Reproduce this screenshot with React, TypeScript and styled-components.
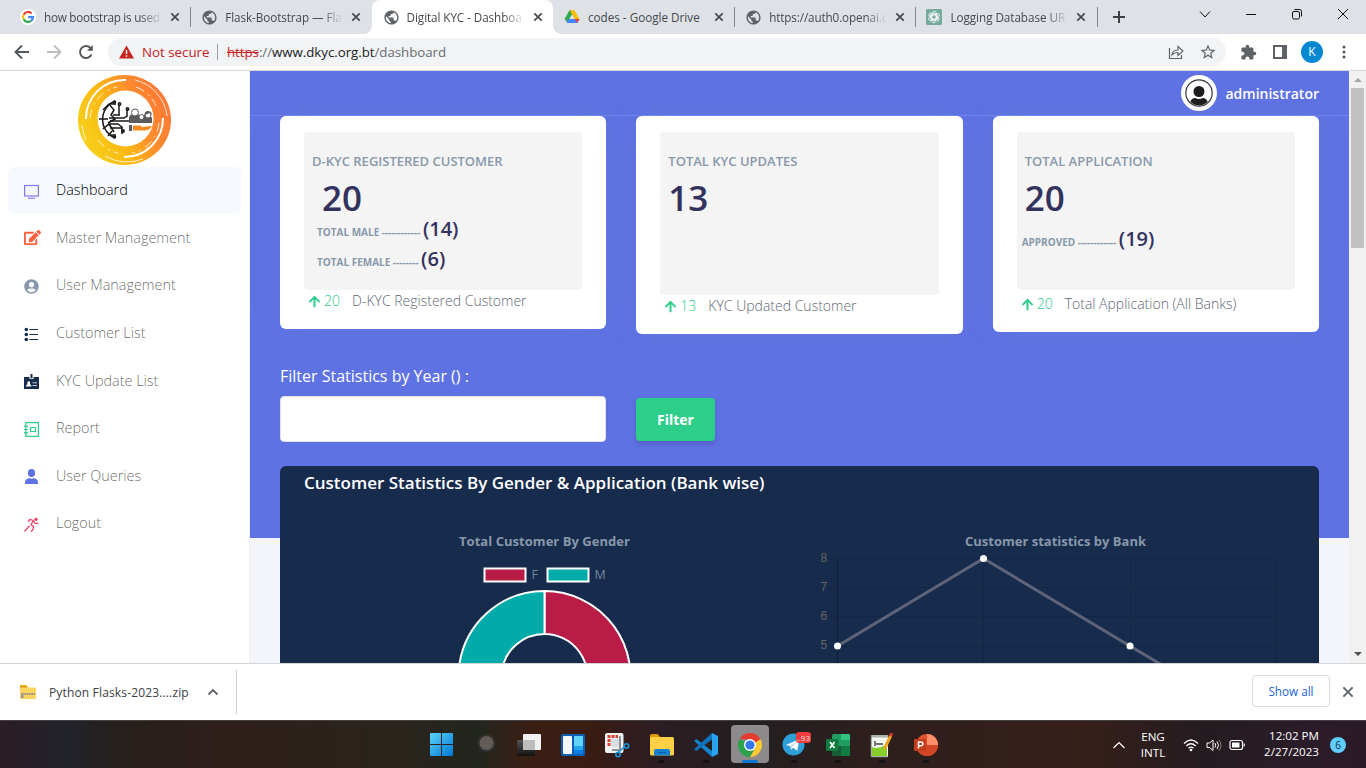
import React from 'react';
import styled, { createGlobalStyle } from 'styled-components';
import { FaArrowUp, FaEdit, FaUserCircle } from 'react-icons/fa';
import { MdExtension, MdStarBorder, MdPublic } from 'react-icons/md';

const Global = createGlobalStyle`
  html, body { margin: 0; padding: 0; }
  body { width: 1366px; height: 768px; overflow: hidden; font-family: "Open Sans", sans-serif; }
  * { box-sizing: border-box; }
  svg { display: block; flex: none; overflow: visible; }
`;

const Screen = styled.div`
  width: 1366px;
  height: 768px;
  display: flex;
  flex-direction: column;
  background: #fff;
`;

/* ---------- browser tabs ---------- */
const TabStrip = styled.div`
  height: 34px;
  background: #dee1e6;
  display: flex;
  padding-left: 9px;
`;

const Tab = styled.div<{ $active?: boolean; $line?: boolean }>`
  position: relative;
  flex: none;
  width: 181.3px;
  height: 34px;
  display: flex;
  align-items: center;
  padding-left: 11px;
  border-radius: 8px 8px 0 0;
  background: ${p => (p.$active ? '#fff' : 'transparent')};
  ${p => p.$active && `
    &::before, &::after {
      content: ''; position: absolute; bottom: 0; width: 8px; height: 8px;
    }
    &::before { left: -8px; background: radial-gradient(circle at 0 0, transparent 7.5px, #fff 8px); }
    &::after { right: -8px; background: radial-gradient(circle at 100% 0, transparent 7.5px, #fff 8px); }
  `}
  ${p => p.$line && `
    &::after {
      content: ''; position: absolute; right: -1px; top: 7px; width: 1px; height: 20px; background: #85888d;
    }
  `}
`;

const Favicon = styled.div`
  width: 16px;
  height: 16px;
  margin-right: 8px;
  color: #5f6368;
`;

const TabTitle = styled.div<{ $fade?: boolean; $ls?: number }>`
  width: 118px;
  height: 20px;
  line-height: 20px;
  overflow: hidden;
  white-space: nowrap;
  font-size: 11.7px;
  letter-spacing: ${p => p.$ls ?? 0}px;
  color: #45494d;
  ${p => p.$fade && 'mask-image: linear-gradient(90deg, #000 82%, transparent 100%);'}
`;

const TabClose = styled.div`
  margin-left: 9px;
`;

const NewTab = styled.div`
  margin: 11px 0 0 16px;
`;

const WindowButtons = styled.div`
  margin-left: auto;
  display: flex;
  gap: 34px;
  padding: 8px 18px 0 0;
  align-items: flex-start;
`;

/* ---------- address bar ---------- */
const Toolbar = styled.div`
  height: 37px;
  background: #fff;
  border-bottom: 1px solid #d6d8db;
  display: flex;
  align-items: center;
  padding: 0 20px 0 14px;
`;

const NavIcons = styled.div`
  display: flex;
  gap: 16px;
  width: 94px;
`;

const Omnibox = styled.div`
  width: 1118px;
  height: 28px;
  border-radius: 14px;
  background: #f1f3f4;
  display: flex;
  align-items: center;
  padding: 0 9px 0 11px;
`;

const NotSecure = styled.span`
  margin-left: 8px;
  width: 67px;
  font-size: 13.3px;
  color: #c5221f;
  white-space: nowrap;
`;

const Separator = styled.span`
  width: 1px;
  height: 16px;
  margin: 0 9px 0 8px;
  background: #9a9da1;
`;

const Url = styled.span`
  font-size: 13.3px;
  letter-spacing: -0.04px;
  color: #6a6e73;
  white-space: nowrap;
  s { color: #c5221f; }
  b { font-weight: 400; color: #202124; }
`;

const OmniActions = styled.div`
  margin-left: auto;
  display: flex;
  align-items: center;
  gap: 15px;
  color: #5f6368;
`;

const ToolbarActions = styled.div`
  margin-left: auto;
  display: flex;
  align-items: center;
  color: #5f6368;
`;

const Profile = styled.div`
  width: 22px;
  height: 22px;
  border-radius: 50%;
  margin: 0 19px 0 10px;
  background: #0288d1;
  color: #fff;
  font-size: 12px;
  line-height: 22px;
  text-align: center;
`;

/* ---------- page ---------- */
const Viewport = styled.div`
  height: 592px;
  display: flex;
  overflow: hidden;
`;

const Sidebar = styled.aside`
  width: 250px;
  padding: 4px 8px 0 8px;
  background: #fff;
  border-right: 1px solid #f0f0f4;
`;

const LogoBox = styled.div`
  height: 92px;
  padding-left: 70px;
`;

const NavItem = styled.div<{ $active?: boolean }>`
  height: 46px;
  margin-bottom: 1.65px;
  border-radius: 6px;
  display: flex;
  align-items: center;
  padding-left: 15px;
  background: ${p => (p.$active ? '#f5f8fc' : 'transparent')};
  color: ${p => (p.$active ? '#000' : 'rgba(0,0,0,.62)')};
`;

const NavIcon = styled.span<{ $up?: number }>`
  width: 33px;
  padding: 3px 0 0 1px;
  margin-top: ${p => -(p.$up ?? 0)}px;
`;

const NavLabel = styled.span`
  font-size: 14.4px;
  font-weight: 300;
  line-height: 22px;
  white-space: nowrap;
`;

const Main = styled.main`
  width: 1099px;
  background: linear-gradient(#5e72e4 467px, #f4f5fb 467px);
  padding: 0 30px;
`;

const TopBar = styled.div`
  height: 45px;
  margin: 0 -30px;
  padding-right: 30px;
  border-bottom: 1px solid #7184ea;
  display: flex;
  justify-content: flex-end;
  align-items: center;
  gap: 8px;
  color: #fff;
  font-size: 14px;
  font-weight: 600;
`;

const StatRow = styled.div`
  display: flex;
  gap: 30px;
  height: 218px;
  align-items: flex-start;
`;

const StatCard = styled.section<{ $h: number }>`
  flex: 1;
  height: ${p => p.$h}px;
  border-radius: 6px;
  background: #fff;
  padding: 16px 24px 0;
  box-shadow: 0 0 32px rgba(136, 152, 170, .1);
`;

const StatPanel = styled.div<{ $h: number }>`
  height: ${p => p.$h}px;
  border-radius: 4px;
  background: #f4f4f4;
  padding: 20px 8px 0;
`;

const StatTitle = styled.div`
  font-size: 13px;
  font-weight: 600;
  line-height: 19px;
  color: #8898aa;
  white-space: nowrap;
`;

const StatValue = styled.div<{ $indent?: number }>`
  padding-left: ${p => p.$indent ?? 0}px;
  height: 52px;
  line-height: 53px;
  font-size: 35px;
  font-weight: 600;
  color: #32325d;
`;

const Breakdown = styled.div<{ $indent: number; $top: number }>`
  height: 30px;
  margin: ${p => p.$top}px 0 0 ${p => p.$indent}px;
  display: flex;
  align-items: baseline;
  gap: 2.5px;
  line-height: 30px;
  font-size: 10px;
  font-weight: 700;
  color: #8898aa;
  white-space: nowrap;
`;

const Count = styled.span`
  font-size: 20px;
  font-weight: 600;
  color: #32325d;
`;

const StatFoot = styled.div<{ $top: number }>`
  display: flex;
  align-items: center;
  margin-top: ${p => p.$top}px;
  padding-left: 4px;
  height: 24px;
  line-height: 20px;
  font-size: 14px;
  font-weight: 300;
  color: #5f6775;
  white-space: nowrap;
  svg { color: #2dce89; }
`;

const Delta = styled.span`
  width: 31px;
  padding-left: 3px;
  flex: none;
  color: #2dce89;
`;

const FilterLabel = styled.div`
  margin-top: 30px;
  height: 24px;
  line-height: 24px;
  font-size: 16px;
  color: #fff;
`;

const FilterRow = styled.div`
  margin-top: 8px;
  height: 70px;
  display: flex;
  gap: 30px;
  align-items: flex-start;
`;

const YearInput = styled.div`
  width: 326px;
  height: 46px;
  border: 1px solid #dee2e6;
  border-radius: 4px;
  background: #fff;
`;

const FilterButton = styled.button`
  width: 79px;
  height: 43px;
  margin-top: 2px;
  padding: 0;
  border: 0;
  border-radius: 4px;
  background: #2dce89;
  color: #fff;
  font: 700 14px "Open Sans", sans-serif;
  box-shadow: 0 3px 5px rgba(50, 50, 93, .25);
`;

const ChartCard = styled.section`
  height: 300px;
  border-radius: 6px;
  background: #172b4d;
`;

const ChartHeader = styled.h2`
  margin: 0;
  height: 34px;
  padding-left: 24px;
  border-bottom: 1px solid #152847;
  line-height: 34px;
  font-size: 17px;
  font-weight: 600;
  color: #fff;
`;

const Charts = styled.div`
  display: flex;
`;

const Scrollbar = styled.div`
  width: 17px;
  background: #f1f1f1;
  display: flex;
  flex-direction: column;
  align-items: center;
  justify-content: space-between;
`;

const ScrollArrow = styled.div<{ $down?: boolean }>`
  width: 0;
  height: 0;
  border: 4px solid transparent;
  ${p => p.$down
    ? 'border-top-color: #505050; border-bottom: 0; margin-bottom: 7px;'
    : 'border-bottom-color: #a3a3a3; border-top: 0; margin-top: 7px;'}
`;

const Thumb = styled.div`
  width: 13px;
  height: 160px;
  margin: 6px 0 auto 0;
  background: #c1c1c1;
`;

/* ---------- downloads ---------- */
const Shelf = styled.div`
  height: 57px;
  border-top: 1px solid #d3d5d9;
  background: #fff;
  display: flex;
  align-items: center;
  padding-right: 13px;
`;

const Download = styled.div`
  width: 237px;
  height: 44px;
  border-right: 1px solid #cfcfcf;
  display: flex;
  align-items: center;
  padding-left: 20px;
  font-size: 12px;
  color: #3c4043;
  white-space: nowrap;
`;

const DownloadName = styled.span`
  flex: none;
  width: 172px;
  padding-left: 13px;
  letter-spacing: 0.15px;
`;

const ShowAll = styled.div`
  margin: -2px 13px 0 auto;
  width: 78px;
  height: 32px;
  border: 1px solid #dadce0;
  border-radius: 4px;
  color: #1a62d8;
  font-size: 11.7px;
  font-weight: 500;
  line-height: 30px;
  text-align: center;
`;

/* ---------- taskbar ---------- */
const Taskbar = styled.div`
  height: 48px;
  border-top: 1px solid #454142;
  background: linear-gradient(90deg, #2b1d25 0, #21222a 5%, #271f1b 9%, #2f1f1b 17%, #29241c 29%, #22261e 35%,
    #3a1f15 38.5%, #3a1c12 43%, #2c1d23 48%, #231f21 55%, #2b1f1d 62%, #371f1a 79%, #241c20 88%, #2c1c2a 97%, #2a1a28 100%);
  display: flex;
  align-items: center;
  padding-left: 419px;
`;

const TaskApp = styled.div<{ $on?: boolean; $dot?: boolean }>`
  position: relative;
  flex: none;
  width: 44.1px;
  height: 47px;
  display: flex;
  align-items: center;
  justify-content: center;
  ${p => p.$on && `
    &::before {
      content: ''; position: absolute; left: 3.500px; top: 4px; width: 38px; height: 38px;
      border-radius: 4px; background: #8d8a8b;
    }
  `}
  ${p => (p.$on || p.$dot) && `
    &::after {
      content: ''; position: absolute; bottom: 5px; left: ${p.$on ? 14 : 19}px;
      width: ${p.$on ? 16 : 6}px; height: 3px; border-radius: 2px; background: ${p.$on ? '#0a78d4' : '#141114'};
    }
  `}
  svg { position: relative; }
`;

const Unread = styled.div`
  position: absolute;
  right: 5px;
  top: 11px;
  width: 15px;
  height: 11px;
  border-radius: 3px;
  background: #ee3b3b;
  color: #ffe4e4;
  font-size: 8px;
  line-height: 11px;
  text-align: center;
`;

const Tray = styled.div`
  margin-left: auto;
  padding-right: 20px;
  display: flex;
  align-items: center;
  color: #fff;
  font-size: 11.6px;
  line-height: 16px;
  white-space: nowrap;
`;

const Language = styled.div`
  width: 30px;
  margin: 1px 15px 0 13px;
  text-align: center;
`;

const TrayIcons = styled.div`
  display: flex;
  align-items: center;
  gap: 7px;
`;

const Clock = styled.div`
  width: 62px;
  margin: -1px 11px 0 11px;
  text-align: right;
`;

const Notifications = styled.div`
  width: 16px;
  height: 16px;
  border-radius: 50%;
  background: #60cdff;
  color: #10303f;
  font-size: 10px;
  line-height: 16px;
  text-align: center;
`;

const Close = ({ size = 8, w = 1.7, color = '#45484c' }: { size?: number; w?: number; color?: string }) => (
  <svg width={size} height={size} viewBox="0 0 8 8" stroke={color} strokeWidth={w}><path d="M.3.3 7.7 7.7M7.7.3.3 7.7" /></svg>
);

const Globe = () => <MdPublic size={17} />;

const GoogleIcon = () => (
  <svg width="16" height="16" viewBox="0 0 16 16" fill="none" strokeWidth="2.2">
    <circle cx="8" cy="8" r="8" fill="#fff" />
    <path d="M11.6 4.4A5 5 0 0 0 3.6 5.7" stroke="#ea4335" />
    <path d="M3.6 5.7a5 5 0 0 0 0 4.6" stroke="#fbbc05" />
    <path d="M3.6 10.3a5 5 0 0 0 7.6 1.5" stroke="#34a853" />
    <path d="M11.2 11.8A4.8 4.8 0 0 0 13 8.1H8.2" stroke="#4285f4" />
  </svg>
);

const DriveIcon = () => (
  <svg width="16" height="16" viewBox="0 0 16 16">
    <path d="M5.4 1.3h1.9L9 4.8 3.4 14 .6 10z" fill="#34a853" />
    <path d="M5.8 1.3h4.6l5 8.7h-4.9z" fill="#fbbc04" />
    <path d="M3.6 10h11.9l-2.3 4H2.9z" fill="#4285f4" />
    <path d="m11 10 4.5 0-2.2 4z" fill="#ea4335" />
    <path d="m8 5.4 2.7 4.7H5.3z" fill="#dee1e6" />
  </svg>
);

const OpenAiIcon = () => (
  <svg width="16" height="16" viewBox="0 0 16 16" fill="none" stroke="#fff" strokeWidth=".8">
    <rect width="16" height="16" rx="1.5" fill="#74aa9c" stroke="none" />
    {[0, 60, 120, 180, 240, 300].map(a => (
      <path key={a} transform={`rotate(${a} 8 8)`} d="M6 8.900V4.600a2.300 2.300 0 0 1 4.200-1.300M6 5.900 8.600 4.400l3.200 1.800" />
    ))}
  </svg>
);

const tabs = [
  { title: 'how bootstrap is used', icon: <GoogleIcon />, fade: true, line: true, ls: -0.25 },
  { title: 'Flask-Bootstrap — Flas', icon: <Globe />, fade: true, ls: -0.08 },
  { title: 'Digital KYC - Dashboa', icon: <Globe />, fade: true, active: true, ls: -0.08 },
  { title: 'codes - Google Drive', icon: <DriveIcon />, line: true },
  { title: 'https://auth0.openai.c', icon: <Globe />, fade: true, line: true, ls: -0.12 },
  { title: 'Logging Database UR', icon: <OpenAiIcon />, fade: true, line: true, ls: -0.05 },
];

const Logo = () => (
  <svg width="93" height="91" viewBox="0 0 93 91" fill="none">
    <defs>
      <linearGradient id="ring" x1="0" y1=".75" x2="1" y2=".3">
        <stop offset="0" stopColor="#f5d41b" />
        <stop offset=".4" stopColor="#fbb814" />
        <stop offset=".7" stopColor="#fd8a2d" />
        <stop offset="1" stopColor="#ff7636" />
      </linearGradient>
    </defs>
    <ellipse cx="46.5" cy="45" rx="46.5" ry="45" fill="url(#ring)" />
    <circle cx="47.5" cy="43.5" r="28" fill="#fff" />
    <g stroke="#fff">
      <path d="M8 44A38.500 38.500 0 0 1 48 5" strokeWidth="2" />
      <path d="M85 43A38.500 38.500 0 0 1 46 82" strokeWidth="2" />
      <path d="M57 5A42 42 0 0 1 89 41M4 50a43 43 0 0 0 4 15M27 81a43 43 0 0 0 38 3" strokeWidth=".8" />
      <path d="M12 43a34 34 0 0 1 27-31M81 48a34 34 0 0 1-27 30M20 65a34 34 0 0 0 20 13M58 12a34 34 0 0 1 20 19" strokeWidth=".8" strokeDasharray="9 5 2 4" />
    </g>
    <g stroke="#17171b" strokeWidth="1.5">
      <path d="M37 26A20 20 0 0 0 37 63" />
      <path d="m25 35 6-6 5 6-3 5 4 4-7 4M21 44h9M25 54l6-5 5 8M30 61l4-5" />
      <path d="M32 46h19M31 43h15l3-2v-7M31 49h9l4 3v7M35 40h6V30M32 53h12M37 40h5" />
      <path d="M33 29h5M33 60h5" />
      <circle cx="41.500" cy="29" r="1.200" /><circle cx="49.500" cy="34" r="1.200" /><circle cx="45" cy="56" r="1.200" />
      <circle cx="36.500" cy="27" r="1" /><circle cx="36.500" cy="62" r="1" />
    </g>
    <g fill="#5b5a5c">
      <path d="M51 48v-6q1-3 6-3t6 3l3-2q5-2 8 3v5z" />
      <circle cx="57" cy="37.500" r="3.500" fill="#fff" stroke="#5b5a5c" />
      <circle cx="63.500" cy="42" r="2.500" fill="#fff" stroke="#5b5a5c" />
      <circle cx="70" cy="40" r="3" fill="#fff" stroke="#5b5a5c" />
      <path d="M66.500 40q0-4 3.500-4t4 4l-2-2z" />
      <rect x="51" y="50" width="3" height="6" />
    </g>
    <path d="M55 50.500h7l2 1.500 10-1q-2 4-7 4.500H55z" fill="#f18a20" />
  </svg>
);

const navItems = [
  { label: 'Dashboard', active: true, icon: (
    <svg width="15" height="15" viewBox="0 0 15 15" fill="none" stroke="#8579e8" strokeWidth="1.200">
      <rect x=".6" y="1.500" width="13.800" height="10.500" /><path d="M4 14.200h7" />
    </svg>) },
  { label: 'Master Management', up: 4, icon: <FaEdit size={17} color="#fb6340" /> },
  { label: 'User Management', icon: <FaUserCircle size={15} color="#8898aa" /> },
  { label: 'Customer List', icon: (
    <svg width="15" height="15" viewBox="0 0 15 15" fill="#172b4d">
      <circle cx="2.300" cy="2.500" r="1.800" /><circle cx="2.300" cy="7.500" r="1.800" /><circle cx="2.300" cy="12.500" r="1.800" />
      <path d="M5.500 2h8.500v1H5.500zM5.500 7h8.500v1H5.500zM5.500 12h8.500v1H5.500z" />
    </svg>) },
  { label: 'KYC Update List', up: 1, icon: (
    <svg width="15" height="15" viewBox="0 0 15 15">
      <path d="M0 3h15v12H0z" fill="#172b4d" />
      <path d="M5.500 2.500h4v2.500h-4z" fill="#fff" /><path d="M6.500 0h2v4.300h-2z" fill="#172b4d" />
      <path d="M2 12.500q0-2 1.500-2.300Q3 7.200 4.800 7.200T6 10.200q1.500.3 1.500 2.300zM8.500 8.500h4.500v.8H8.500zM8.500 11h4.500v.8H8.500z" fill="#fff" />
    </svg>) },
  { label: 'Report', icon: (
    <svg width="15" height="15" viewBox="0 0 15 15" fill="none" stroke="#2dce89" strokeWidth="1.200">
      <path d="M1.800.6h12.600v13.800H1.800zM6.500 5.500h5v4h-5zM0 4.300h4M0 7.500h4M0 10.700h4" />
    </svg>) },
  { label: 'User Queries', up: 1, icon: (
    <svg width="15" height="15" viewBox="0 0 15 15" fill="#5e72e4">
      <ellipse cx="7.500" cy="4" rx="3.600" ry="4" /><path d="M1 15v-2q.2-3 4.300-4 2.200 1.400 4.400 0 4.100 1 4.300 4v2z" />
    </svg>) },
  { label: 'Logout', icon: (
    <svg width="15" height="15" viewBox="0 0 15 15" fill="none" stroke="#f5365c" strokeWidth="1.200">
      <circle cx="12" cy="2.300" r="1.600" fill="#f5365c" stroke="none" />
      <path d="M4 4.500 6 2.500l3.500 1-2.500 4 2.500 2-.5 3-2 2M9.500 4l2 2.500 3-.5M.3 14.300l5.200-5.300" />
    </svg>) },
];

const Doughnut = () => (
  <svg width="529" height="200" viewBox="0 0 529 200" fontFamily="Open Sans, sans-serif">
    <text x="264.500" y="46" textAnchor="middle" fontSize="13" fontWeight="700" fill="#8898aa" textLength="171">Total Customer By Gender</text>
    <g stroke="#fff" strokeWidth="2">
      <rect x="204.500" y="68.500" width="41" height="13" fill="#b91d47" />
      <rect x="267.500" y="68.500" width="41" height="13" fill="#00aba9" />
      <path d="M264.500 91a86 86 0 0 1 81.800 112.600L305.400 190.300A43 43 0 0 0 264.500 134z" fill="#b91d47" />
      <path d="M346.300 203.600A86 86 0 1 1 264.500 91V134A43 43 0 1 0 305.400 190.300z" fill="#00aba9" />
    </g>
    <text x="251.500" y="79" fontSize="12.500" fill="#76879e">F</text>
    <text x="314.500" y="79" fontSize="12.500" fill="#76879e">M</text>
  </svg>
);

const LineChart = () => (
  <svg width="510" height="200" viewBox="0 0 510 200">
    <text x="246.500" y="46" textAnchor="middle" fontSize="13" fontWeight="700" fill="#8898aa" textLength="181" fontFamily="Open Sans, sans-serif">Customer statistics by Bank</text>
    <g stroke="#142643">
      {[58.5, 87.5, 116.5, 146.5, 175.5].map(y => <path key={y} d={`M21 ${y}H467`} />)}
      <path d="M174.500 58V200M321.500 58V200M467.500 58V200" />
    </g>
    <path d="M28.500 58V200" stroke="#101c33" />
    <g fontSize="12" fill="#666" fontFamily="Liberation Sans, sans-serif">
      <text x="11.500" y="62">8</text><text x="11.500" y="91">7</text><text x="11.500" y="120">6</text><text x="11.500" y="149">5</text>
    </g>
    <path d="M28.500 146 174.500 58.500 321 146 467 233" fill="none" stroke="#5d6479" strokeWidth="3" />
    <g fill="#fff"><circle cx="28.500" cy="146" r="3.500" /><circle cx="174.500" cy="58.500" r="3.500" /><circle cx="321" cy="146" r="3.500" /></g>
  </svg>
);

const taskApps: { on?: boolean; dot?: boolean; badge?: string; icon: React.ReactNode }[] = [
  { icon: (
    <svg width="23" height="23" viewBox="0 0 23 23">
      <defs><linearGradient id="win" x1="0" y1="0" x2="1" y2="1"><stop offset="0" stopColor="#5bd3fb" /><stop offset="1" stopColor="#0078d4" /></linearGradient></defs>
      <path d="M0 1q0-1 1-1h10v11H0zM12 0h10q1 0 1 1v10H12zM0 12h11v11H1q-1 0-1-1zM12 12h11v10q0 1-1 1H12z" fill="url(#win)" />
    </svg>) },
  { icon: (
    <svg width="20" height="22" viewBox="0 0 20 22">
      <path d="m0 21 5-6" stroke="#262627" strokeWidth="3" /><circle cx="11.500" cy="9" r="8" fill="#625b56" stroke="#323233" strokeWidth="2" />
    </svg>) },
  { icon: (
    <svg width="24" height="22" viewBox="0 0 24 22">
      <defs><linearGradient id="tv" x1="0" y1="0" x2="0" y2="1"><stop offset="0" stopColor="#555" /><stop offset="1" stopColor="#111" /></linearGradient></defs>
      <rect x="0" y="6" width="18" height="16" rx="1" fill="url(#tv)" /><rect x="6" width="18" height="16" rx="1" fill="#f1f1f1" /><path d="M6 6h12v10H6z" fill="#bdbdbd" />
    </svg>) },
  { icon: (
    <svg width="24" height="22" viewBox="0 0 24 22">
      <rect width="24" height="22" rx="2" fill="#0a5fb4" /><rect x="2" y="2" width="9" height="18" rx="1" fill="#f5f8fb" />
      <rect x="13" y="2" width="9" height="10" fill="#61d2fb" /><rect x="13" y="12" width="9" height="4" fill="#23a5ee" /><rect x="13" y="16" width="9" height="4" fill="#0b7fe6" />
    </svg>) },
  { icon: (
    <svg width="24" height="24" viewBox="0 0 24 24" fill="none">
      <rect x="0" y="0" width="18.500" height="20" rx="2" fill="#f0f1f3" />
      <path d="M2.500 3.500H13M4 2v12" stroke="#d9452a" strokeWidth="3" strokeDasharray="3 1" />
      <path d="M6 6h9v8H6z" fill="#dadde2" /><path d="M15 3v14H7" stroke="#8d9299" strokeWidth="2" />
      <circle cx="21.500" cy="13" r="2.200" stroke="#1c97e0" strokeWidth="1.500" /><circle cx="13" cy="21.500" r="2.200" stroke="#1c97e0" strokeWidth="1.500" />
      <path d="m19.500 13.800-6 5.500" stroke="#1c97e0" strokeWidth="1.500" />
    </svg>) },
  { dot: true, icon: (
    <svg width="24" height="22" viewBox="0 0 24 22">
      <path d="M0 1.500Q0 0 1.500 0h6l2.500 2.500V6H0z" fill="#dc9a08" /><rect y="3" width="24" height="18.500" rx="1.500" fill="#fdcf45" />
      <path d="M4 21.500V17q0-2 2-2h12q2 0 2 2v4.500z" fill="#1580d2" /><path d="M8 18.500h8" stroke="#0d5ca8" />
    </svg>) },
  { dot: true, icon: (
    <svg width="24" height="24" viewBox="0 0 24 24">
      <path d="M0 7.700 2.300 6 18 18v6z" fill="#1484cf" />
      <path d="M18 0v6.500L2.300 18 0 16.300z" fill="#0f72bd" /><path d="M18 0 24 3v18l-6 3z" fill="#27a5f3" />
    </svg>) },
  { on: true, icon: (
    <svg width="24" height="24" viewBox="0 0 24 24">
      <path d="M1.600 6A12 12 0 0 1 22.400 6L17 12 12 6.500z" fill="#e33b2e" />
      <path d="M1.600 6A12 12 0 0 0 12 24l5.200-9-5.200-3z" fill="#2ba24c" />
      <path d="M22.400 6A12 12 0 0 1 12 24l5.200-9V6z" fill="#fcc934" /><path d="M12 6h10.400l-5 3.500z" fill="#e33b2e" />
      <circle cx="12" cy="12" r="6" fill="#fff" /><circle cx="12" cy="12" r="4.600" fill="#3378ea" />
    </svg>) },
  { dot: true, badge: '..93', icon: (
    <svg width="23" height="23" viewBox="0 0 24 24">
      <circle cx="12" cy="12" r="11.500" fill="#2f9fd8" /><path d="m4 12.500 14-6-2 12-4.500-3-2 2-1-4z" fill="#fff" /><path d="m8.500 13.500 7-5-5 6-1 3z" fill="#b7d6e8" />
    </svg>) },
  { dot: true, icon: (
    <svg width="24" height="22" viewBox="0 0 24 22">
      <rect x="6" width="18" height="22" rx="1.500" fill="#1f9d62" /><path d="M15 0h7.500q1.500 0 1.500 1.500V6h-9z" fill="#33c481" /><path d="M6 12h9v10H7.500Q6 22 6 20.500z" fill="#185c37" /><path d="M15 12h9v8.500q0 1.500-1.500 1.500H15z" fill="#107c41" />
      <rect y="5" width="12.500" height="12" rx="1" fill="#107c41" /><path d="m4 8 4.500 6M8.500 8 4 14" stroke="#fff" strokeWidth="1.600" />
    </svg>) },
  { dot: true, icon: (
    <svg width="23" height="24" viewBox="0 0 23 24">
      <path d="M1 2h17v22H1z" fill="#f4f6f0" /><path d="M2 14q8 3 15-4v13H2z" fill="#86cf2b" /><path d="M1 2h17v2.500H1z" fill="#aeb3ad" />
      <path d="M5 8v5M6 11h7" stroke="#444" strokeWidth="1.400" /><path d="m21 2-6.500 14" stroke="#f0a322" strokeWidth="3" /><path d="m22 0-1.500 3" stroke="#c33" strokeWidth="3" />
      <path d="M1 2v22h17" stroke="#5d625a" fill="none" />
    </svg>) },
  { dot: true, icon: (
    <svg width="24" height="22" viewBox="0 0 24 22">
      <circle cx="13" cy="11" r="11" fill="#e4532f" /><path d="M13 0a11 11 0 0 1 11 11H13z" fill="#ff8f6b" /><path d="M2 11h22a11 11 0 0 1-22 0z" fill="#d24625" />
      <rect y="5" width="12" height="12" rx="1" fill="#c43e1c" /><path d="M4.500 14.500V8H7a1.800 1.800 0 0 1 0 3.800H4.500" fill="none" stroke="#fff" strokeWidth="1.500" />
    </svg>) },
];

export default function App() {
  return (
    <Screen>
      <Global />
      <TabStrip>
        {tabs.map(t => (
          <Tab key={t.title} $active={t.active} $line={t.line}>
            <Favicon>{t.icon}</Favicon>
            <TabTitle $fade={t.fade} $ls={t.ls}>{t.title}</TabTitle>
            <TabClose><Close /></TabClose>
          </Tab>
        ))}
        <NewTab><svg width="12" height="12" stroke="#3c4043" strokeWidth="2"><path d="M6 0v12M0 6h12" /></svg></NewTab>
        <WindowButtons>
          <svg width="12" height="12" fill="none" stroke="#111"><path d="M2 3.500 7 9l5-5.500" /></svg>
          <svg width="12" height="12" fill="none" stroke="#111"><path d="M2 6.500h10" /></svg>
          <svg width="12" height="12" fill="none" stroke="#111"><rect x="2.500" y="3.500" width="7" height="7.500" rx="1.500" /><path d="M4.500 1.500h5q2 0 2 2v5" /></svg>
          <svg width="12" height="12" fill="none" stroke="#111"><path d="m2 1 10 10M12 1 2 11" /></svg>
        </WindowButtons>
      </TabStrip>
      <Toolbar>
        <NavIcons>
          <svg width="16" height="16" fill="none" stroke="#54585d" strokeWidth="1.900"><path d="M15 8H2M8 1.500 1.500 8 8 14.500" /></svg>
          <svg width="16" height="16" fill="none" stroke="#bbbdc0" strokeWidth="1.900"><path d="M1 8h13M8 1.500 14.500 8 8 14.500" /></svg>
          <svg width="16" height="16" fill="none" stroke="#54585d" strokeWidth="1.900"><path d="M13.500 10.500A6 6 0 1 1 12.500 4" /><path d="M14.800 1v5.800H9z" fill="#54585d" stroke="none" /></svg>
        </NavIcons>
        <Omnibox>
          <svg width="15" height="14" viewBox="0 0 15 14"><path d="M7.500.500 15 13.500H0z" fill="#c5271f" /><path d="M7.500 5v4M7.500 10.300v1.500" stroke="#fff" strokeWidth="1.400" /></svg>
          <NotSecure>Not secure</NotSecure>
          <Separator />
          <Url><s>https</s>://<b>www.dkyc.org.bt</b>/dashboard</Url>
          <OmniActions>
            <svg width="16" height="16" fill="none" stroke="#5f6368" strokeWidth="1.200"><path d="M1.500 4v10.500h12V11M4 11q.5-5 6-5V2.500l5 4.500-5 4.500V8.500q-4 0-6 2.500z" /></svg>
            <MdStarBorder size={18} />
          </OmniActions>
        </Omnibox>
        <ToolbarActions>
          <MdExtension size={17} />
          <svg width="34" height="14"><path d="M17 1h12v12H17z" fill="#fff" stroke="#5f6368" strokeWidth="2" /><path d="M25 1h5v12h-5z" fill="#5f6368" /></svg>
          <Profile>K</Profile>
          <svg width="4" height="14" fill="#54585d"><circle cx="2" cy="2" r="1.500" /><circle cx="2" cy="7" r="1.500" /><circle cx="2" cy="12" r="1.500" /></svg>
        </ToolbarActions>
      </Toolbar>

      <Viewport>
        <Sidebar>
          <LogoBox><Logo /></LogoBox>
          {navItems.map(n => (
            <NavItem key={n.label} $active={n.active}>
              <NavIcon $up={n.up}>{n.icon}</NavIcon>
              <NavLabel>{n.label}</NavLabel>
            </NavItem>
          ))}
        </Sidebar>
        <Main>
          <TopBar>
            <svg width="36" height="36" viewBox="0 0 36 36">
              <defs><clipPath id="face"><circle cx="18" cy="18" r="12.300" /></clipPath></defs>
              <circle cx="18" cy="18" r="18" fill="#fff" />
              <circle cx="18" cy="18" r="13.200" fill="none" stroke="#333" strokeWidth="1.200" />
              <g fill="#1d1d1f" clipPath="url(#face)"><circle cx="18" cy="16.500" r="5.500" /><path d="M8 32q1-9 6-9 4 2 8 0 5 0 6 9z" /></g>
            </svg>
            administrator
          </TopBar>
          <StatRow>
            <StatCard $h={213}>
              <StatPanel $h={158}>
                <StatTitle>D-KYC REGISTERED CUSTOMER</StatTitle>
                <StatValue $indent={10}>20</StatValue>
                <Breakdown $indent={5} $top={-9}>TOTAL MALE<span>------------</span><Count>(14)</Count></Breakdown>
                <Breakdown $indent={5} $top={0}>TOTAL FEMALE<span>--------</span><Count>(6)</Count></Breakdown>
              </StatPanel>
              <StatFoot $top={-1}><FaArrowUp size={13} /><Delta>20</Delta>D-KYC Registered Customer</StatFoot>
            </StatCard>
            <StatCard $h={218}>
              <StatPanel $h={163}>
                <StatTitle>TOTAL KYC UPDATES</StatTitle>
                <StatValue>13</StatValue>
              </StatPanel>
              <StatFoot $top={-1}><FaArrowUp size={13} /><Delta>13</Delta>KYC Updated Customer</StatFoot>
            </StatCard>
            <StatCard $h={216}>
              <StatPanel $h={158}>
                <StatTitle>TOTAL APPLICATION</StatTitle>
                <StatValue>20</StatValue>
                <Breakdown $indent={-3} $top={1}>APPROVED<span>------------</span><Count>(19)</Count></Breakdown>
              </StatPanel>
              <StatFoot $top={2}><FaArrowUp size={13} /><Delta>20</Delta>Total Application (All Banks)</StatFoot>
            </StatCard>
          </StatRow>
          <FilterLabel>Filter Statistics by Year () :</FilterLabel>
          <FilterRow>
            <YearInput />
            <FilterButton>Filter</FilterButton>
          </FilterRow>
          <ChartCard>
            <ChartHeader>Customer Statistics By Gender &amp; Application (Bank wise)</ChartHeader>
            <Charts><Doughnut /><LineChart /></Charts>
          </ChartCard>
        </Main>
        <Scrollbar>
          <ScrollArrow />
          <Thumb />
          <ScrollArrow $down />
        </Scrollbar>
      </Viewport>

      <Shelf>
        <Download>
          <svg width="16" height="14" viewBox="0 0 16 14"><path d="M0 1q0-1 1-1h5l2 2v3H0z" fill="#e9a70c" /><rect y="2.500" width="16" height="11.500" rx="1" fill="#fcd462" /><path d="M2 9h13" stroke="#888" strokeWidth="2" strokeDasharray="1 .7" /><path d="M1 8h2.500v5H1z" fill="#999" /></svg>
          <DownloadName>Python Flasks-2023....zip</DownloadName>
          <svg width="10" height="8" fill="none" stroke="#5f6368" strokeWidth="1.800"><path d="m.5 6.500 4.500-4.500 4.500 4.500" /></svg>
        </Download>
        <ShowAll>Show all</ShowAll>
        <Close size={10} w={1.5} color="#5f6368" />
      </Shelf>

      <Taskbar>
        {taskApps.map((a, i) => (
          <TaskApp key={i} $on={a.on} $dot={a.dot}>
            {a.icon}
            {a.badge && <Unread>{a.badge}</Unread>}
          </TaskApp>
        ))}
        <Tray>
          <svg width="12" height="8" fill="none" stroke="#fff" strokeWidth="1.200"><path d="m.5 7 5.500-5.500L11.500 7" /></svg>
          <Language>ENG<br />INTL</Language>
          <TrayIcons>
            <svg width="16" height="14" fill="none" stroke="#fff" strokeWidth="1.200"><path d="M1 5.500Q8-1.500 15 5.500M3.300 8q4.700-4.500 9.400 0M5.500 10.200q2.500-2.200 5 0" /><circle cx="8" cy="12" r="1.300" fill="#fff" stroke="none" /></svg>
            <svg width="16" height="14" fill="none" stroke="#fff"><path d="M1 5h2.500L7 2v10.500L3.500 9.500H1zM9 5q1.500 2.200 0 4.500M11 3.500q3 3.700 0 7.500" /><path d="M13 2q4 5.200 0 10.500" stroke="#8b8385" /></svg>
            <svg width="17" height="12" fill="none" stroke="#fff" strokeWidth="1.200"><rect x="1" y="1.500" width="12.500" height="9" rx="2" /><path d="M3 3.500h7.500v5H3z" fill="#fff" stroke="none" /><path d="M15.200 4.500v3" /></svg>
          </TrayIcons>
          <Clock>12:02 PM<br />2/27/2023</Clock>
          <Notifications>6</Notifications>
        </Tray>
      </Taskbar>
    </Screen>
  );
}
